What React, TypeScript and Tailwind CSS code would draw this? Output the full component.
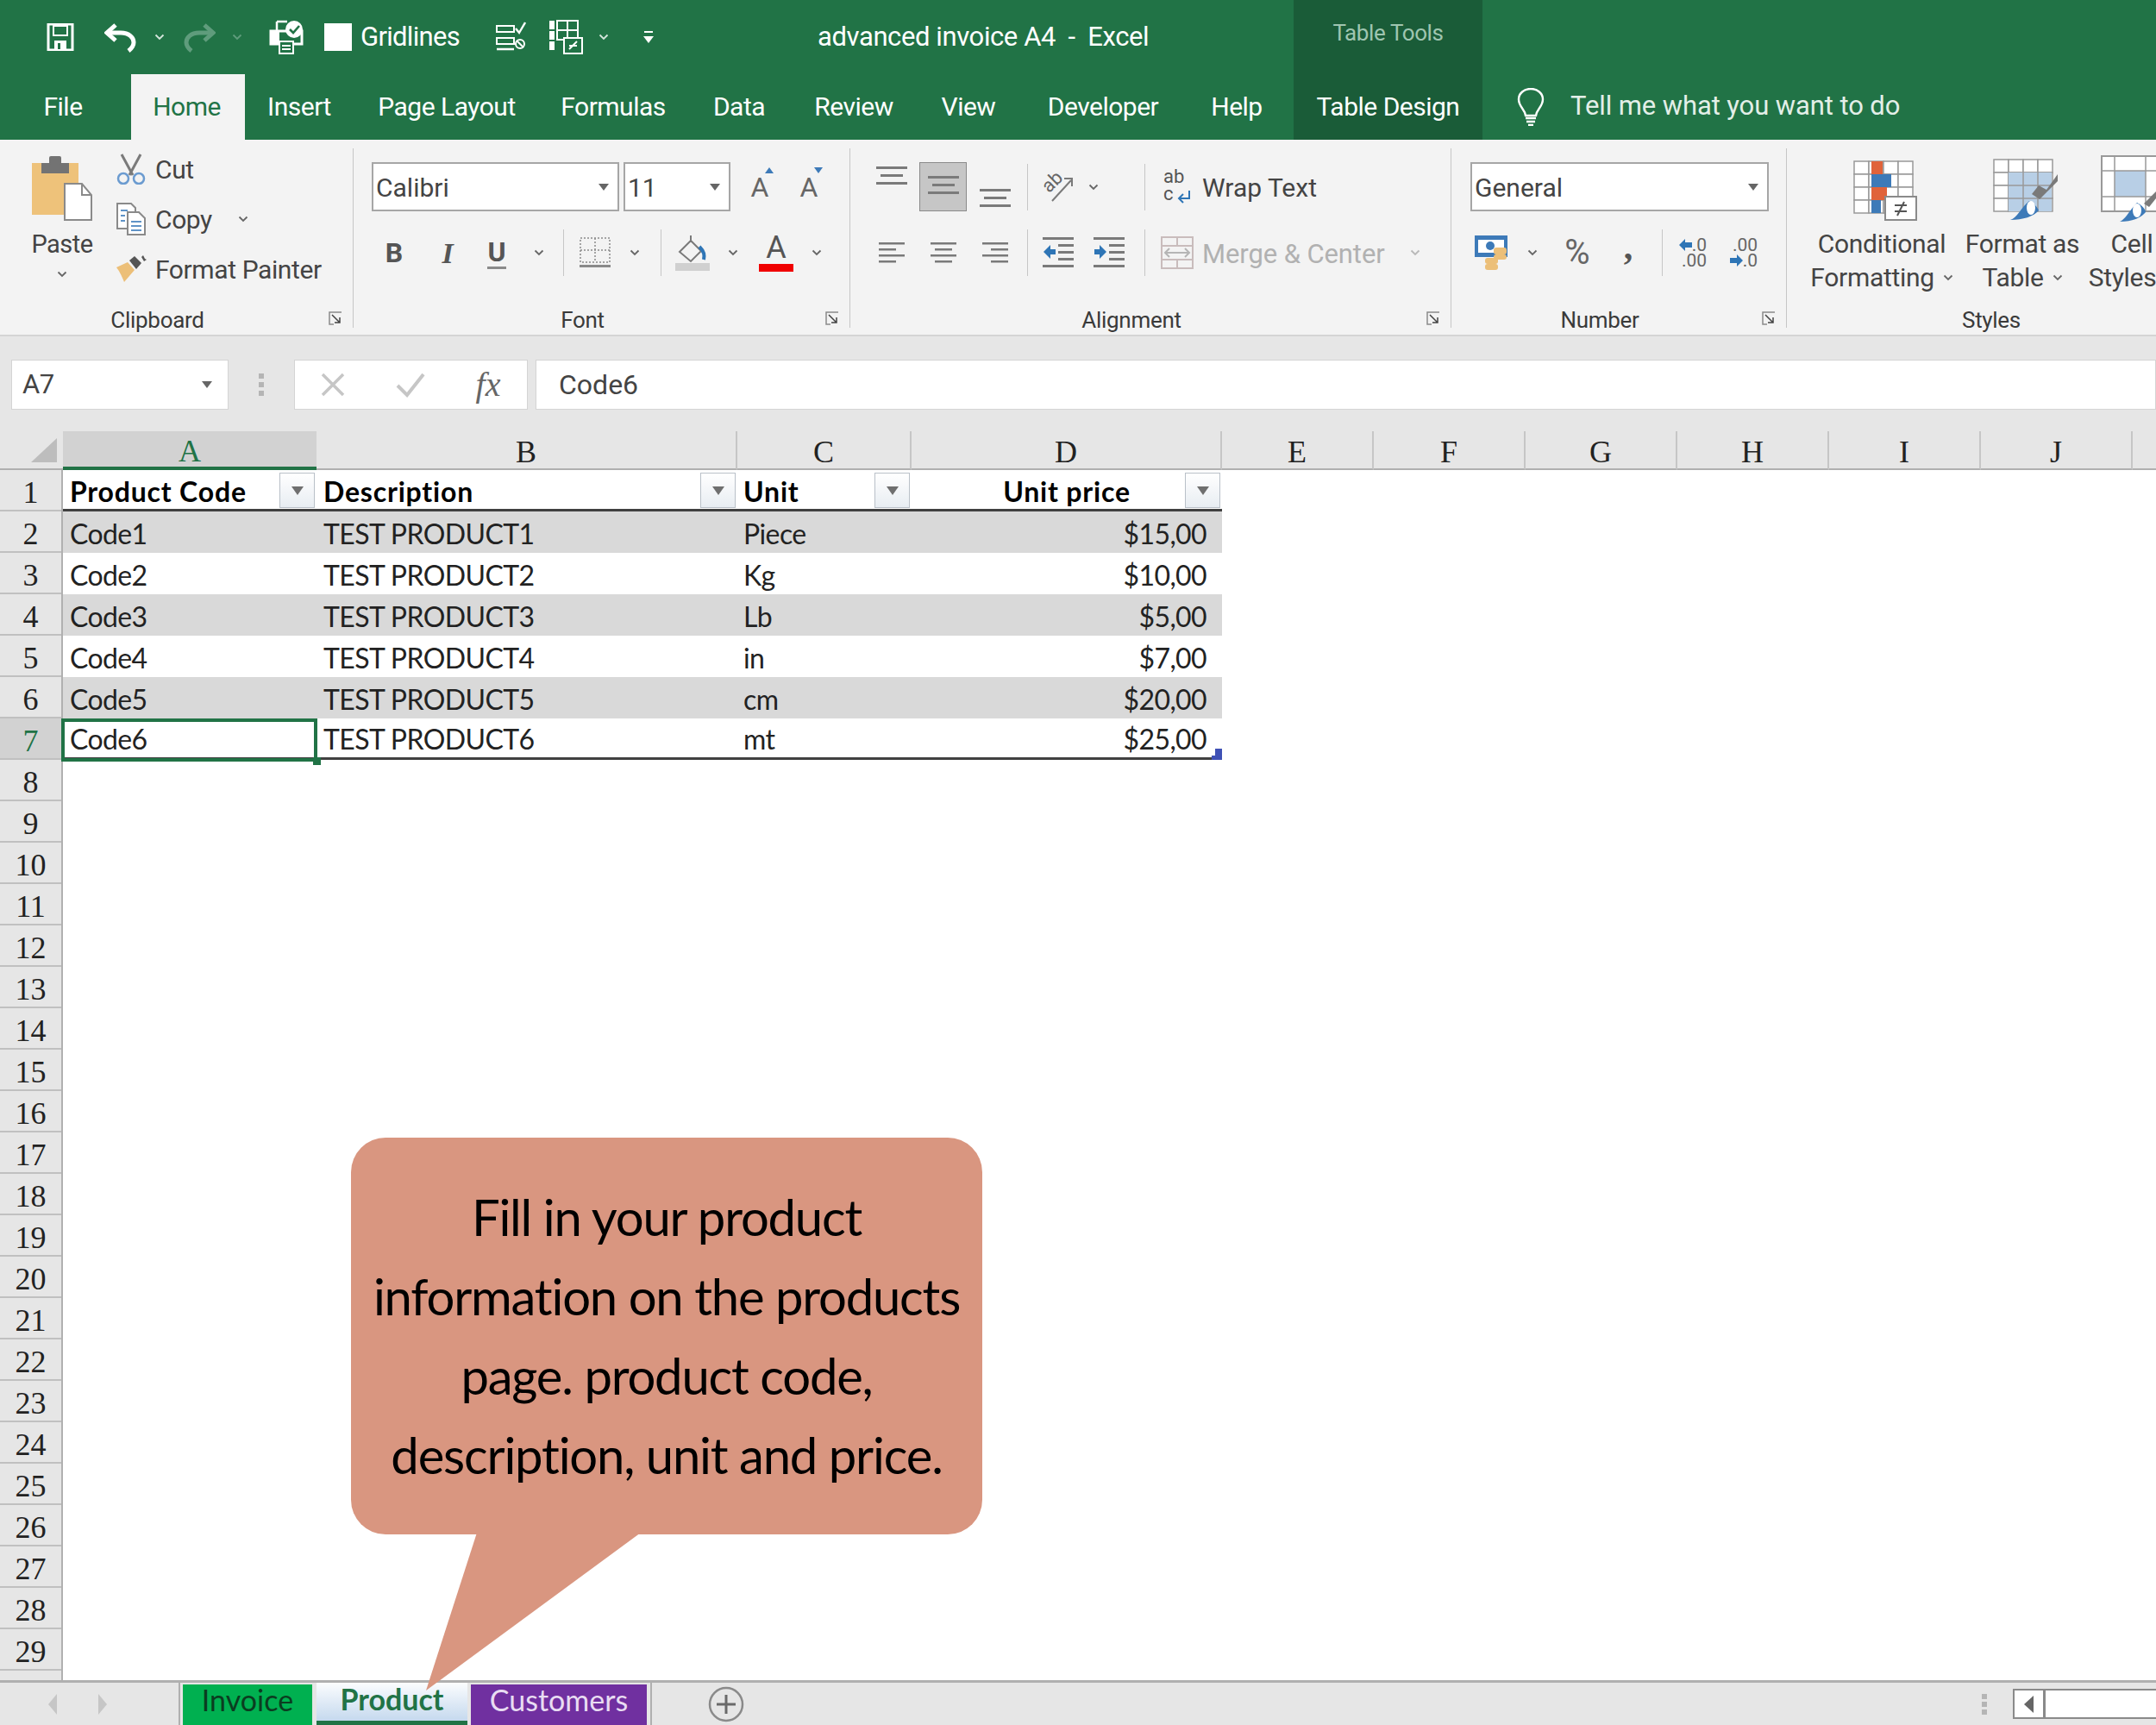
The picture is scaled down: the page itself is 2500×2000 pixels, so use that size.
import type { ReactNode } from 'react'

const TABS = [
  { label: 'File', w: 'w-[152px] pr-[6px]' },
  { label: 'Home', w: 'w-[132px] pr-[3px]', active: true },
  { label: 'Insert', w: 'w-[126px]' },
  { label: 'Page Layout', w: 'w-[216px]' },
  { label: 'Formulas', w: 'w-[170px]' },
  { label: 'Data', w: 'w-[122px]' },
  { label: 'Review', w: 'w-[144px]' },
  { label: 'View', w: 'w-[122px]' },
  { label: 'Developer', w: 'w-[190px]' },
  { label: 'Help', w: 'w-[126px] pr-[6px]' },
]

const COLS = [
  { label: 'A', w: 'w-[294px]', active: true },
  { label: 'B', w: 'w-[488px]' },
  { label: 'C', w: 'w-[202px]' },
  { label: 'D', w: 'w-[360px]' },
  { label: 'E', w: 'w-[176px]' },
  { label: 'F', w: 'w-[176px]' },
  { label: 'G', w: 'w-[176px]' },
  { label: 'H', w: 'w-[176px]' },
  { label: 'I', w: 'w-[176px]' },
  { label: 'J', w: 'w-[176px]' },
  { label: '', w: 'w-[100px]' },
]

const PRODUCTS = [
  ['Code1', 'TEST PRODUCT1', 'Piece', '$15,00'],
  ['Code2', 'TEST PRODUCT2', 'Kg', '$10,00'],
  ['Code3', 'TEST PRODUCT3', 'Lb', '$5,00'],
  ['Code4', 'TEST PRODUCT4', 'in', '$7,00'],
  ['Code5', 'TEST PRODUCT5', 'cm', '$20,00'],
  ['Code6', 'TEST PRODUCT6', 'mt', '$25,00'],
]

const ROW_NUMBERS = Array.from({ length: 29 }, (_, i) => i + 1)

function Slot({ className, children }: { className: string; children?: ReactNode }) {
  return <div className={`flex shrink-0 items-center justify-center ${className}`}>{children}</div>
}

function Chevron({ color = '#666666' }: { color?: string }) {
  return (
    <svg width="12" height="8" viewBox="0 0 12 8" className="shrink-0">
      <path d="M1.5 1.5 6 6l4.5-4.5" fill="none" stroke={color} strokeWidth="1.8" />
    </svg>
  )
}

function Caret() {
  return (
    <svg width="12" height="8" viewBox="0 0 12 8" className="shrink-0">
      <path d="M0 0h12L6 8z" fill="#666666" />
    </svg>
  )
}

function Sep({ className = '' }: { className?: string }) {
  return <div className={`h-[54px] w-px shrink-0 bg-[#c6c6c6] ${className}`} />
}

function Launcher() {
  return (
    <svg width="16" height="16" viewBox="0 0 16 16" className="absolute right-[12px] top-[5px]">
      <path d="M15 1H1v14h5" fill="none" stroke="#8a8a8a" strokeWidth="1.5" />
      <path d="M4 4l9 9M13 7v6H7" fill="none" stroke="#444444" strokeWidth="1.5" />
    </svg>
  )
}

function Group({ label, w, launcher, children }: { label: string; w: string; launcher?: boolean; children: ReactNode }) {
  return (
    <div className={`relative flex h-[228px] shrink-0 flex-col ${w}`}>
      <div className="h-[194px] shrink-0">{children}</div>
      <div className={`relative flex h-[30px] items-center justify-center text-[26px] tracking-[-0.3px] text-[#3a3a3a] ${launcher ? 'pr-[44px]' : ''}`}>
        {label}
        {launcher && <Launcher />}
      </div>
    </div>
  )
}

function Divider() {
  return <div className="mt-[10px] h-[208px] w-px shrink-0 bg-[#c6c6c6]" />
}

function Combo({ text, w }: { text: string; w: string }) {
  return (
    <div className={`flex h-[57px] shrink-0 items-center justify-between border-2 border-[#a6a6a6] bg-white pl-[3px] pr-[10px] text-[30px] text-[#444444] ${w}`}>
      <span className="pt-[2px]">{text}</span>
      <Caret />
    </div>
  )
}

function AlignLines({ kind, offset = 0 }: { kind: 'center' | 'left' | 'right'; offset?: number }) {
  const rows = [0, 1, 2, 3]
  const widths = [30, 20, 30, 20]
  return (
    <svg width="32" height="32" viewBox="0 0 32 32">
      {rows.map(i => {
        const w = widths[i]
        const x = kind === 'left' ? 1 : kind === 'right' ? 31 - w : 16 - w / 2
        return <rect key={i} x={x} y={offset + i * 7} width={w} height="2.5" fill="#7a7a7a" />
      })}
    </svg>
  )
}

function ThreeLines({ top }: { top: number }) {
  return (
    <svg width="36" height="44" viewBox="0 0 36 44">
      {[0, 1, 2].map(i => (
        <rect key={i} x={i === 1 ? 5 : 0} y={top + i * 9} width={i === 1 ? 26 : 36} height="3" fill="#7a7a7a" />
      ))}
    </svg>
  )
}

function IndentIcon({ dir }: { dir: 'in' | 'out' }) {
  return (
    <svg width="38" height="36" viewBox="0 0 38 36">
      {[0, 32].map(y => <rect key={y} x="0" y={y} width="36" height="3" fill="#7a7a7a" />)}
      {[8, 16, 24].map(y => <rect key={y} x="18" y={y} width="18" height="3" fill="#7a7a7a" />)}
      {dir === 'out' ? (
        <path d="M1 17 9 9v5h6v6H9v5z" fill="#2e75b6" />
      ) : (
        <path d="M15 17 7 9v5H1v6h6v5z" fill="#2e75b6" />
      )}
    </svg>
  )
}

function BlueArrow({ dir }: { dir: 'left' | 'right' }) {
  return (
    <svg width="15" height="14" viewBox="0 0 15 14" className="shrink-0">
      <path d={dir === 'left' ? 'M0 7l7-7v4h8v6H7v4z' : 'M15 7 8 0v4H0v6h8v4z'} fill="#2e75b6" />
    </svg>
  )
}

function FilterButton() {
  return (
    <div className="absolute right-[2px] top-[3px] flex h-[41px] w-[41px] items-center justify-center border border-[#b9c0c8] bg-gradient-to-b from-white to-[#e8edf2]">
      <svg width="14" height="10" viewBox="0 0 14 10"><path d="M0 0h14L7 10z" fill="#6f6f6f" /></svg>
    </div>
  )
}

function QuickAccess() {
  return (
    <div className="flex h-[86px] items-center">
      <Slot className="ml-[54px] w-[32px]">
        <svg width="32" height="32" viewBox="0 0 32 32">
          <path d="M2 1h28v30H2z" fill="none" stroke="#fff" strokeWidth="3" />
          <path d="M8 3h16v11H8z" fill="#217346" stroke="#fff" strokeWidth="2" />
          <path d="M9 30v-10h14v10" fill="#fff" />
          <rect x="13" y="23" width="3" height="7" fill="#217346" />
        </svg>
      </Slot>
      <Slot className="ml-[35px] w-[38px]">
        <svg width="38" height="36" viewBox="0 0 38 36">
          <path d="M13 4 3 13l10 9" fill="none" stroke="#fff" strokeWidth="5" />
          <path d="M5 13h14c10 0 15 6 15 11 0 4-2 7-6 10" fill="none" stroke="#fff" strokeWidth="5" />
        </svg>
      </Slot>
      <Slot className="ml-[20px] w-[12px]"><Chevron color="#d5e6dc" /></Slot>
      <Slot className="ml-[21px] w-[38px]">
        <svg width="38" height="36" viewBox="0 0 38 36">
          <path d="M25 4l10 9-10 9" fill="none" stroke="#5f9c7c" strokeWidth="5" />
          <path d="M33 13H19C9 13 4 19 4 24c0 4 2 7 6 10" fill="none" stroke="#5f9c7c" strokeWidth="5" />
        </svg>
      </Slot>
      <Slot className="ml-[19px] w-[12px]"><Chevron color="#5f9c7c" /></Slot>
      <Slot className="ml-[31px] w-[40px]">
        <svg width="40" height="40" viewBox="0 0 40 40">
          <path d="M9 2h12M9 2v10" fill="none" stroke="#fff" strokeWidth="2.5" />
          <path d="M2 13h36v15H2z" fill="none" stroke="#fff" strokeWidth="3" />
          <rect x="2" y="14" width="10" height="13" fill="#fff" />
          <rect x="12" y="25" width="16" height="14" fill="#217346" stroke="#fff" strokeWidth="2" />
          <path d="M15 30h10M15 34h10" stroke="#fff" strokeWidth="2" />
          <circle cx="29" cy="11" r="10" fill="#fff" />
          <path d="M24 11l4 4 7-8" fill="none" stroke="#217346" strokeWidth="2.6" />
        </svg>
      </Slot>
      <div className="ml-[24px] h-[32px] w-[32px] shrink-0 bg-white" />
      <span className="ml-[10px] w-[138px] shrink-0 text-[31px] tracking-[-0.7px] text-white">Gridlines</span>
      <Slot className="ml-[18px] w-[36px]">
        <svg width="36" height="36" viewBox="0 0 36 36">
          <path d="M2 5h20v7H2zM2 19h20v7H2z" fill="none" stroke="#fff" strokeWidth="2" />
          <path d="M2 32h20M24 8l4 5 7-12" fill="none" stroke="#fff" strokeWidth="2.4" />
          <circle cx="29" cy="26" r="5" fill="none" stroke="#fff" strokeWidth="2" />
          <path d="M25 22l8 8" stroke="#fff" strokeWidth="2" />
        </svg>
      </Slot>
      <Slot className="ml-[26px] w-[40px]">
        <svg width="40" height="40" viewBox="0 0 40 40">
          <path d="M1 1h6v10H1zM1 13h6v10H1zM1 25h6v10H1z" fill="#fff" />
          <path d="M10 1h24v22H10z" fill="none" stroke="#fff" strokeWidth="2" />
          <path d="M22 1v22M10 12h24" stroke="#fff" strokeWidth="2" />
          <path d="M18 21h21v18H18z" fill="#217346" stroke="#fff" strokeWidth="2" />
          <path d="M24 34l9-9M24 30h9" stroke="#fff" strokeWidth="2" />
        </svg>
      </Slot>
      <Slot className="ml-[18px] w-[12px]"><Chevron color="#d5e6dc" /></Slot>
      <Slot className="ml-[40px] w-[12px]">
        <svg width="12" height="16" viewBox="0 0 12 16">
          <path d="M1 1h10v2H1zM0 7h12l-6 8z" fill="#fff" />
        </svg>
      </Slot>
      <span className="ml-[190px] w-[414px] shrink-0 whitespace-pre text-[31px] tracking-[-0.4px] text-white">advanced invoice A4  -  Excel</span>
      <div className="ml-[138px] flex h-[86px] w-[219px] shrink-0 items-center justify-center bg-[#1a5c38] pb-[10px] text-[26px] tracking-[-0.4px] text-[#9fc5b0]">
        Table Tools
      </div>
    </div>
  )
}

function RibbonTabs() {
  return (
    <div className="flex h-[76px] items-stretch text-[30px] tracking-[-0.5px] text-white">
      {TABS.map(t => (
        <div
          key={t.label}
          className={`flex shrink-0 items-center justify-center pb-[2px] ${t.w} ${t.active ? 'bg-[#f3f3f3] text-[#217346]' : ''}`}
        >
          {t.label}
        </div>
      ))}
      <div className="flex w-[219px] shrink-0 items-center justify-center bg-[#1a5c38] pb-[2px]">Table Design</div>
      <Slot className="ml-[37px] w-[38px]">
        <svg width="32" height="44" viewBox="0 0 32 44">
          <path d="M10 32C9 24 2 22 2 13a14 12 0 0 1 28 0c0 9-7 11-8 19z" fill="none" stroke="#fff" strokeWidth="2.4" />
          <path d="M10 35h12M11 39h10M13 43h6" stroke="#fff" strokeWidth="2.4" />
        </svg>
      </Slot>
      <span className="ml-[27px] flex items-center whitespace-nowrap pb-[2px] text-[31px] tracking-[-0.1px] text-[#e3efe8]">Tell me what you want to do</span>
    </div>
  )
}

function ClipboardGroup() {
  return (
    <Group label="Clipboard" w="w-[409px]" launcher>
      <div className="flex">
        <div className="ml-[10px] flex w-[124px] shrink-0 flex-col items-center pt-[18px]">
          <svg width="70" height="76" viewBox="0 0 70 76">
            <path d="M0 9h54v60H0z" fill="#eec27a" />
            <path d="M11 9h32v12H11z" fill="#737373" />
            <rect x="20" y="1" width="14" height="10" rx="2" fill="#737373" />
            <path d="M38 33h20l11 13v29H38z" fill="#fff" stroke="#8a8a8a" strokeWidth="2" />
            <path d="M58 33v13h11" fill="none" stroke="#8a8a8a" strokeWidth="2" />
          </svg>
          <span className="mt-[10px] text-[29px] leading-[34px] tracking-[-0.5px] text-[#444444]">Paste</span>
          <div className="mt-[14px]"><Chevron /></div>
        </div>
        <div className="flex flex-col pt-[5px] text-[30px] tracking-[-0.4px] text-[#444444]">
          <div className="flex h-[58px] items-center">
            <Slot className="w-[46px] pr-[10px]">
              <svg width="34" height="36" viewBox="0 0 34 36">
                <path d="M6 1l13 24M28 1L15 25" stroke="#7a7a7a" strokeWidth="3" fill="none" />
                <circle cx="8" cy="29" r="6" fill="none" stroke="#6b9bd0" strokeWidth="2.5" />
                <circle cx="26" cy="29" r="6" fill="none" stroke="#6b9bd0" strokeWidth="2.5" />
              </svg>
            </Slot>
            <span>Cut</span>
          </div>
          <div className="flex h-[58px] items-center">
            <Slot className="w-[46px] pr-[10px]">
              <svg width="34" height="38" viewBox="0 0 34 38">
                <path d="M1 1h16l5 5v24H1z" fill="#fff" stroke="#8a8a8a" strokeWidth="2" />
                <path d="M13 11h13l7 7v19H13z" fill="#fff" stroke="#8a8a8a" strokeWidth="2" />
                <path d="M5 9h8M5 15h5M5 21h5M17 22h12M17 27h12M17 32h12" stroke="#5f93c7" strokeWidth="2" />
              </svg>
            </Slot>
            <span>Copy</span>
            <div className="ml-[30px]"><Chevron /></div>
          </div>
          <div className="flex h-[58px] items-center">
            <Slot className="w-[46px] pr-[10px]">
              <svg width="36" height="32" viewBox="0 0 36 32">
                <path d="M1 14 14 8l8 9-12 14C8 26 5 19 1 14z" fill="#ecbf78" />
                <path d="M16 6l6-5 8 8-6 7z" fill="#555555" />
                <path d="M30 2l2-2 2 4 2 1-3 2z" fill="#555555" />
              </svg>
            </Slot>
            <span className="whitespace-nowrap">Format Painter</span>
          </div>
        </div>
      </div>
    </Group>
  )
}

function FontGroup() {
  return (
    <Group label="Font" w="w-[575px]" launcher>
      <div className="flex flex-col pl-[21px] pt-[26px] text-[#444444]">
        <div className="flex h-[57px] items-center">
          <Combo text="Calibri" w="w-[287px]" />
          <div className="ml-[5px]"><Combo text="11" w="w-[124px]" /></div>
          <Slot className="ml-[6px] w-[56px]">
            <span className="relative text-[32px] text-[#666666]">
              A
              <span className="absolute -right-[6px] top-[1px] h-0 w-0 border-x-[5px] border-b-[7px] border-x-transparent border-b-[#3d7ab8]" />
            </span>
          </Slot>
          <Slot className="w-[58px]">
            <span className="relative text-[32px] text-[#666666]">
              A
              <span className="absolute -right-[6px] top-[1px] h-0 w-0 border-x-[5px] border-t-[7px] border-x-transparent border-t-[#3d7ab8]" />
            </span>
          </Slot>
        </div>
        <div className="mt-[20px] flex h-[56px] items-center">
          <Slot className="w-[52px] text-[32px] font-bold text-[#555555]">B</Slot>
          <Slot className="w-[72px] font-['Liberation_Serif',serif] text-[34px] font-bold italic text-[#555555]">I</Slot>
          <Slot className="w-[42px] text-[32px] font-bold text-[#555555]">
            <span className="border-b-[3px] border-[#8a8a8a] leading-[34px]">U</span>
          </Slot>
          <Slot className="w-[56px]"><Chevron /></Slot>
          <Sep />
          <Slot className="w-[72px]">
            <svg width="36" height="36" viewBox="0 0 36 36">
              <path d="M1 1h34v28H1zM18 1v28M1 15h34" fill="none" stroke="#8a8a8a" strokeWidth="1.5" strokeDasharray="2 2" />
              <rect x="0" y="32" width="36" height="3" fill="#8a8a8a" />
            </svg>
          </Slot>
          <Slot className="w-[20px]"><Chevron /></Slot>
          <div className="w-[20px] shrink-0" />
          <Sep />
          <Slot className="w-[72px]">
            <svg width="40" height="42" viewBox="0 0 40 42">
              <path d="M18 1v8M18 7 5 20l13 11 12-12z" fill="none" stroke="#7a7a7a" strokeWidth="2" />
              <path d="M28 14c6 6 6 10 5 15" fill="none" stroke="#2e75b6" strokeWidth="4" />
              <rect x="0" y="33" width="40" height="9" fill="#d0d0d0" />
            </svg>
          </Slot>
          <Slot className="w-[22px]"><Chevron /></Slot>
          <Slot className="w-[78px]">
            <div className="flex flex-col items-center">
              <span className="text-[36px] leading-[30px] text-[#555555]">A</span>
              <div className="mt-[4px] h-[9px] w-[40px] bg-[#f00000]" />
            </div>
          </Slot>
          <Slot className="w-[16px]"><Chevron /></Slot>
        </div>
      </div>
    </Group>
  )
}

function AlignmentGroup() {
  return (
    <Group label="Alignment" w="w-[696px]" launcher>
      <div className="flex flex-col pl-[20px] pt-[26px] text-[30px]">
        <div className="flex h-[57px] items-center">
          <Slot className="h-[57px] w-[56px] items-start">
            <ThreeLines top={5} />
          </Slot>
          <Slot className="ml-[4px] h-[57px] w-[55px] border border-[#8a8a8a] bg-[#c6c6c6]">
            <ThreeLines top={9} />
          </Slot>
          <Slot className="h-[57px] w-[66px] items-end">
            <ThreeLines top={18} />
          </Slot>
          <Sep className="ml-[4px]" />
          <Slot className="ml-[4px] w-[64px]">
            <span className="relative block h-[40px] w-[40px]">
              <span className="absolute left-[0px] top-[2px] block -rotate-45 text-[22px] leading-[24px] text-[#666666]">ab</span>
              <svg width="40" height="40" viewBox="0 0 40 40" className="absolute left-0 top-0">
                <path d="M12 36 34 12M26 10h9v9" fill="none" stroke="#7a7a7a" strokeWidth="2" />
              </svg>
            </span>
          </Slot>
          <Slot className="w-[16px]"><Chevron /></Slot>
          <div className="w-[51px] shrink-0" />
          <Sep />
          <Slot className="ml-[17px] w-[40px]">
            <span className="relative block h-[44px] w-[32px] text-[22px] leading-[20px] tracking-normal text-[#555555]">
              ab
              <span className="block">c</span>
              <svg width="16" height="16" viewBox="0 0 16 16" className="absolute bottom-[2px] right-0">
                <path d="M14 0v9H3M7 4 2 9l5 5" fill="none" stroke="#2e75b6" strokeWidth="2" />
              </svg>
            </span>
          </Slot>
          <span className="ml-[9px] pt-[2px] text-[#444444]">Wrap Text</span>
        </div>
        <div className="mt-[20px] flex h-[56px] items-center">
          <Slot className="w-[56px]"><AlignLines kind="left" offset={4} /></Slot>
          <Slot className="ml-[4px] w-[56px]"><AlignLines kind="center" offset={4} /></Slot>
          <Slot className="w-[64px]"><AlignLines kind="right" offset={4} /></Slot>
          <Sep className="ml-[5px]" />
          <Slot className="ml-[4px] w-[64px]"><IndentIcon dir="out" /></Slot>
          <Slot className="w-[54px]"><IndentIcon dir="in" /></Slot>
          <div className="w-[13px] shrink-0" />
          <Sep />
          <Slot className="ml-[17px] w-[40px]">
            <svg width="38" height="38" viewBox="0 0 38 38">
              <path d="M1 1h36v36H1zM1 11h36M1 27h36M19 1v10M19 27v10" fill="none" stroke="#c9bcbc" strokeWidth="2" />
              <path d="M5 19h28M10 14l-5 5 5 5M28 14l5 5-5 5" fill="none" stroke="#b5b5b5" strokeWidth="2" />
            </svg>
          </Slot>
          <span className="ml-[9px] w-[212px] shrink-0 whitespace-nowrap pt-[4px] text-[31px] tracking-[-0.1px] text-[#b1b1b1]">Merge &amp; Center</span>
          <Slot className="ml-[29px] w-[12px]"><Chevron color="#b8b8b8" /></Slot>
        </div>
      </div>
    </Group>
  )
}

function NumberGroup() {
  return (
    <Group label="Number" w="w-[388px]" launcher>
      <div className="flex flex-col pl-[22px] pt-[26px]">
        <Combo text="General" w="w-[346px]" />
        <div className="mt-[20px] flex h-[56px] items-center text-[#555555]">
          <Slot className="w-[50px]">
            <svg width="40" height="40" viewBox="0 0 40 40">
              <path d="M0 0h38v25H0z" fill="#3d7ab8" />
              <rect x="4" y="5" width="30" height="15" fill="#fff" />
              <circle cx="18" cy="12" r="5" fill="#3d7ab8" />
              <rect x="22" y="14" width="15" height="8" rx="3" fill="#ecbf78" />
              <rect x="22" y="22" width="15" height="6" rx="3" fill="#ecbf78" />
              <rect x="12" y="26" width="15" height="7" rx="3" fill="#ecbf78" />
              <rect x="12" y="33" width="15" height="7" rx="3" fill="#ecbf78" />
            </svg>
          </Slot>
          <Slot className="ml-[10px] w-[24px]"><Chevron /></Slot>
          <Slot className="ml-[10px] w-[60px] text-[40px] text-[#666666]">%</Slot>
          <Slot className="w-[58px] font-['Liberation_Serif',serif] text-[42px] font-bold text-[#555555]"><span className="-mt-[14px]">,</span></Slot>
          <Sep className="ml-[10px]" />
          <Slot className="w-[70px]">
            <div className="flex flex-col items-end text-[21px] leading-[18px] text-[#666666]">
              <span className="flex items-center"><BlueArrow dir="left" />.0</span>
              <span>.00</span>
            </div>
          </Slot>
          <Slot className="w-[48px]">
            <div className="flex flex-col items-end text-[21px] leading-[18px] text-[#666666]">
              <span>.00</span>
              <span className="flex items-center"><BlueArrow dir="right" />.0</span>
            </div>
          </Slot>
        </div>
      </div>
    </Group>
  )
}

function StyleItem({ w, icon, lines }: { w: string; icon: ReactNode; lines: [string, string] }) {
  return (
    <div className={`flex shrink-0 flex-col items-center pt-[24px] text-[30px] leading-[39px] tracking-[-0.3px] text-[#444444] ${w}`}>
      <div className="h-[77px]">{icon}</div>
      <span className="whitespace-nowrap">{lines[0]}</span>
      <span className="flex items-center gap-[10px] whitespace-nowrap">
        {lines[1]}
        <Chevron />
      </span>
    </div>
  )
}

function GridCells({ cols, rows }: { cols: number; rows: number }) {
  const cells = []
  for (let r = 0; r < rows; r++) {
    for (let c = 0; c < cols; c++) {
      cells.push(<rect key={`${r}-${c}`} x={1 + c * 17} y={1 + r * 15} width="17" height="15" fill="#fff" stroke="#999999" strokeWidth="1.5" />)
    }
  }
  return <>{cells}</>
}

function StylesGroup() {
  return (
    <Group label="Styles" w="w-[474px]">
      <div className="flex w-[474px] overflow-hidden">
        <StyleItem
          w="w-[220px]"
          lines={['Conditional', 'Formatting']}
          icon={
            <svg width="74" height="70" viewBox="0 0 74 70" className="ml-[8px]">
              <GridCells cols={4} rows={4} />
              <rect x="21" y="1" width="13" height="15" fill="#e0633a" />
              <rect x="21" y="16" width="23" height="15" fill="#3d7ab8" />
              <rect x="21" y="31" width="18" height="15" fill="#e0633a" />
              <rect x="21" y="46" width="11" height="15" fill="#3d7ab8" />
              <rect x="37" y="42" width="36" height="27" fill="#fff" stroke="#8a8a8a" strokeWidth="2" />
              <path d="M48 52h14M48 59h14M51 64l8-16" stroke="#555555" strokeWidth="2" fill="none" />
            </svg>
          }
        />
        <StyleItem
          w="w-[106px]"
          lines={['Format as', 'Table']}
          icon={
            <svg width="76" height="72" viewBox="0 0 76 72" className="-mt-[2px] ml-[8px]">
              <GridCells cols={4} rows={4} />
              <rect x="18" y="16" width="50" height="45" fill="#b8cfe6" />
              <path d="M35 16v45M52 16v45M18 31h50M18 46h50" stroke="#999999" strokeWidth="1.5" />
              <path d="M75 18 62 36l-9-5-8 10 9 6 9-9 12-12z" fill="#7a7a7a" />
              <path d="M20 71c8-2 12-14 22-22 6 3 10 8 11 11-6 7-18 11-33 11z" fill="#3d7ab8" />
              <ellipse cx="44" cy="57" rx="5" ry="8" fill="#fff" />
            </svg>
          }
        />
        <StyleItem
          w="w-[148px]"
          lines={['Cell', 'Styles']}
          icon={
            <svg width="72" height="78" viewBox="0 0 72 78" className="-mt-[6px]">
              <path d="M1 1h70v64H1z" fill="#fff" stroke="#999999" strokeWidth="2" />
              <rect x="16" y="18" width="36" height="30" fill="#b8cfe6" />
              <path d="M16 1v64M52 1v64M1 18h70M1 48h70" stroke="#999999" strokeWidth="1.5" />
              <path d="M64 50 56 60l-6-4 14-14z" fill="#7a7a7a" />
              <path d="M22 77c6-2 12-14 20-22 6 3 10 8 10 11-6 7-16 11-30 11z" fill="#3d7ab8" />
              <ellipse cx="42" cy="64" rx="5" ry="8" fill="#fff" />
            </svg>
          }
        />
      </div>
    </Group>
  )
}

function Ribbon() {
  return (
    <div className="flex h-[228px] overflow-hidden border-b-2 border-[#d4d4d4] bg-[#f3f3f3]">
      <ClipboardGroup />
      <Divider />
      <FontGroup />
      <Divider />
      <AlignmentGroup />
      <Divider />
      <NumberGroup />
      <Divider />
      <StylesGroup />
    </div>
  )
}

function FormulaBar() {
  return (
    <div className="flex h-[110px] items-start pl-[13px] pt-[27px]">
      <div className="flex h-[58px] w-[252px] shrink-0 items-center justify-between border border-[#d4d4d4] bg-white pl-[12px] pr-[18px] text-[31px] tracking-[-0.4px] text-[#444444]">
        A7
        <Caret />
      </div>
      <div className="flex h-[58px] w-[76px] shrink-0 flex-col items-center justify-center gap-[4px]">
        {[0, 1, 2].map(i => <div key={i} className="h-[6px] w-[6px] bg-[#b5b5b5]" />)}
      </div>
      <div className="flex h-[58px] w-[271px] shrink-0 items-center border border-[#d4d4d4] bg-white">
        <Slot className="w-[88px]">
          <svg width="30" height="30" viewBox="0 0 30 30"><path d="M3 3l24 24M27 3 3 27" stroke="#c6c6c6" strokeWidth="3.5" /></svg>
        </Slot>
        <Slot className="w-[92px]">
          <svg width="34" height="30" viewBox="0 0 34 30"><path d="M2 16l11 11L32 3" fill="none" stroke="#c6c6c6" strokeWidth="4" /></svg>
        </Slot>
        <Slot className="w-[88px] font-['Liberation_Serif',serif] text-[40px] italic text-[#666666]">fx</Slot>
      </div>
      <div className="ml-[9px] flex h-[58px] flex-1 items-center border border-[#d4d4d4] bg-white pl-[26px] text-[32px] text-[#444444]">
        Code6
      </div>
    </div>
  )
}

function ColumnHeaders() {
  return (
    <div className="flex h-[45px] font-['Liberation_Serif',serif] text-[36px] text-[#222222]">
      <div className="flex w-[73px] shrink-0 items-end justify-end border-b-2 border-[#b0b0b0] pb-[7px] pr-[7px]">
        <div className="h-0 w-0 border-b-[28px] border-l-[30px] border-b-[#bdbdbd] border-l-transparent" />
      </div>
      {COLS.map(c => (
        <div
          key={c.label}
          className={`flex shrink-0 items-center justify-center pt-[5px] ${c.w} ${
            c.active
              ? 'border-b-[4px] border-[#217346] bg-[#d2d2d2] text-[#217346]'
              : 'border-b-2 border-r-2 border-[#b0b0b0] border-r-[#c6c6c6]'
          }`}
        >
          {c.label}
        </div>
      ))}
    </div>
  )
}

function RowHeaders() {
  return (
    <div className="w-[73px] shrink-0 border-r-2 border-[#b0b0b0] font-['Liberation_Serif',serif] text-[36px] text-[#222222]">
      {ROW_NUMBERS.map(n => (
        <div
          key={n}
          className={`flex h-[48px] items-center justify-center border-b-2 border-[#c0c0c0] pt-[6px] ${
            n === 7 ? 'bg-[#d2d2d2] text-[#217346]' : ''
          }`}
        >
          {n}
        </div>
      ))}
    </div>
  )
}

function Sheet() {
  return (
    <div className="relative flex-1 bg-white font-['Lato',sans-serif] text-[32px] tracking-[-0.6px] text-[#222222]">
      <div className="flex h-[48px] w-[1344px] items-center border-b-[3px] border-[#404040] font-bold tracking-[0.8px] text-black">
        <div className="relative flex h-full w-[294px] items-center pl-[8px] pt-[4px]">Product Code<FilterButton /></div>
        <div className="relative flex h-full w-[488px] items-center pl-[8px] pt-[4px]">Description<FilterButton /></div>
        <div className="relative flex h-full w-[202px] items-center pl-[7px] pt-[4px]">Unit<FilterButton /></div>
        <div className="relative flex h-full w-[360px] items-center justify-center pt-[4px]">Unit price<FilterButton /></div>
      </div>
      {PRODUCTS.map((p, i) => (
        <div
          key={p[0]}
          className={`flex h-[48px] w-[1344px] items-center pt-[3px] ${i % 2 === 0 ? 'bg-[#d9d9d9]' : 'bg-white'} ${
            i === 5 ? 'border-b-[3px] border-[#404040]' : ''
          }`}
        >
          <div className="w-[294px] pl-[8px]">{p[0]}</div>
          <div className="w-[488px] pl-[8px]">{p[1]}</div>
          <div className="w-[202px] pl-[7px]">{p[2]}</div>
          <div className="w-[360px] pr-[18px] text-right">{p[3]}</div>
        </div>
      ))}
      <div className="absolute left-[-2px] top-[288px] h-[50px] w-[297px] border-[4px] border-[#217346]" />
      <div className="absolute left-[290px] top-[333px] h-[9px] w-[9px] bg-[#217346]" />
      <div className="absolute left-[1336px] top-[323px] h-[13px] w-[8px] bg-[#3f51b5]" />
      <div className="absolute left-[1332px] top-[331px] h-[5px] w-[12px] bg-[#3f51b5]" />
    </div>
  )
}

function SheetTabs() {
  return (
    <div className="flex h-[52px] items-stretch overflow-hidden border-t-[3px] border-[#b0b0b0] bg-[#e6e6e6]">
      <Slot className="ml-[50px] w-[22px]">
        <svg width="12" height="26" viewBox="0 0 12 26"><path d="M11 1v24L1 13z" fill="#c6c6c6" /></svg>
      </Slot>
      <Slot className="ml-[36px] w-[22px]">
        <svg width="12" height="26" viewBox="0 0 12 26"><path d="M1 1v24l10-12z" fill="#c6c6c6" /></svg>
      </Slot>
      <div className="ml-[77px] w-[2px] shrink-0 bg-[#b0b0b0]" />
      <div className="ml-[3px] mt-[2px] flex w-[150px] shrink-0 items-center justify-center bg-[#00b050] pb-[12px] font-['Lato',sans-serif] text-[34px] text-[#0b3d20]">
        Invoice
      </div>
      <div className="ml-[5px] -mt-[3px] flex w-[175px] shrink-0 items-center justify-center border-b-[5px] border-[#217346] bg-gradient-to-b from-white to-[#c5d9ee] pb-[4px] font-['Lato',sans-serif] text-[34px] font-bold text-[#217346]">
        Product
      </div>
      <div className="ml-[4px] mt-[2px] flex w-[204px] shrink-0 items-center justify-center bg-[#7030a0] pb-[12px] font-['Lato',sans-serif] text-[34px] text-[#e8dcf2]">
        Customers
      </div>
      <div className="ml-[4px] w-[2px] shrink-0 bg-[#b0b0b0]" />
      <Slot className="ml-[65px] w-[42px]">
        <svg width="42" height="42" viewBox="0 0 42 42">
          <circle cx="21" cy="21" r="19" fill="none" stroke="#8a8a8a" strokeWidth="2.5" />
          <path d="M21 10v22M10 21h22" stroke="#6a6a6a" strokeWidth="3" />
        </svg>
      </Slot>
      <div className="ml-[1435px] flex w-[6px] shrink-0 flex-col items-center justify-center gap-[3px]">
        {[0, 1, 2].map(i => <div key={i} className="h-[6px] w-[6px] shrink-0 bg-[#b5b5b5]" />)}
      </div>
      <div className="my-[7px] ml-[30px] flex w-[170px] shrink-0 items-stretch border-2 border-r-0 border-[#8a8a8a] bg-white">
        <Slot className="w-[36px] border-r-[3px] border-[#8a8a8a]">
          <svg width="12" height="20" viewBox="0 0 12 20"><path d="M11 0v20L0 10z" fill="#666666" /></svg>
        </Slot>
      </div>
    </div>
  )
}

function Callout() {
  return (
    <div className="absolute left-[407px] top-[1319px] z-10 h-[460px] w-[732px] font-['Lato',sans-serif]">
      <div className="h-[460px] whitespace-nowrap rounded-[40px] bg-[#d99680] py-[46px] text-center text-[58px] leading-[92px] tracking-[-1.2px] text-black">
        <div>Fill in your product</div>
        <div>information on the products</div>
        <div>page. product code,</div>
        <div>description, unit and price.</div>
      </div>
      <svg width="300" height="190" viewBox="0 0 300 190" className="absolute left-[80px] top-[458px]">
        <path d="M66 0 7 183 256 0z" fill="#d99680" />
      </svg>
    </div>
  )
}

export default function App() {
  return (
    <div className="relative h-[2000px] w-[2500px] overflow-hidden bg-[#e6e6e6] font-['Roboto',sans-serif]">
      <div className="bg-[#217346]">
        <QuickAccess />
        <RibbonTabs />
      </div>
      <Ribbon />
      <FormulaBar />
      <ColumnHeaders />
      <div className="flex h-[1403px] overflow-hidden">
        <RowHeaders />
        <Sheet />
      </div>
      <SheetTabs />
      <Callout />
    </div>
  )
}
